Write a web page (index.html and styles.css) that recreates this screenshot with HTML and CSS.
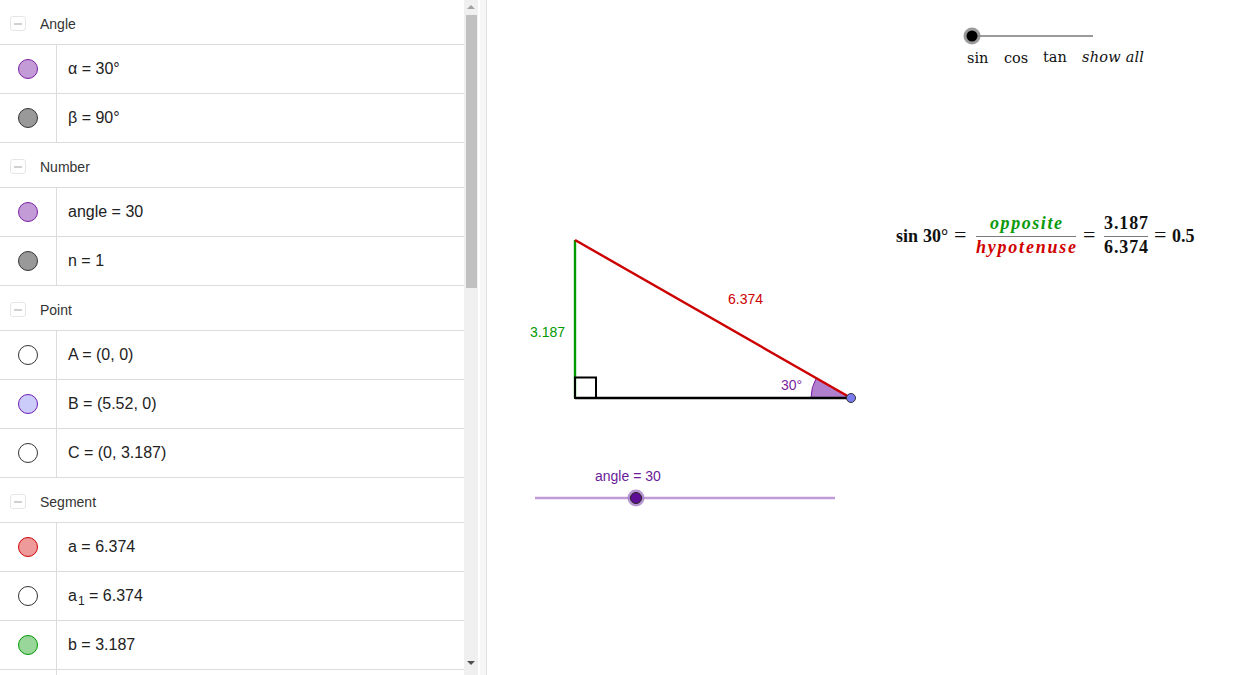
FILE: index.html
```html
<!DOCTYPE html>
<html>
<head>
<meta charset="utf-8">
<link rel="stylesheet" href="styles.css">
</head>
<body>
<div class="app">
  <div class="algebra">
    <div class="group"><span class="toggle"></span><span class="gname">Angle</span></div>
    <div class="row"><div class="mark"><span class="dot purple"></span></div><div class="val">α = 30°</div></div>
    <div class="row"><div class="mark"><span class="dot gray"></span></div><div class="val">β = 90°</div></div>
    <div class="group"><span class="toggle"></span><span class="gname">Number</span></div>
    <div class="row"><div class="mark"><span class="dot purple"></span></div><div class="val">angle = 30</div></div>
    <div class="row"><div class="mark"><span class="dot gray"></span></div><div class="val">n = 1</div></div>
    <div class="group"><span class="toggle"></span><span class="gname">Point</span></div>
    <div class="row"><div class="mark"><span class="dot white"></span></div><div class="val">A = (0, 0)</div></div>
    <div class="row"><div class="mark"><span class="dot lilac"></span></div><div class="val">B = (5.52, 0)</div></div>
    <div class="row"><div class="mark"><span class="dot white"></span></div><div class="val">C = (0, 3.187)</div></div>
    <div class="group"><span class="toggle"></span><span class="gname">Segment</span></div>
    <div class="row"><div class="mark"><span class="dot red"></span></div><div class="val">a = 6.374</div></div>
    <div class="row"><div class="mark"><span class="dot white"></span></div><div class="val">a<sub>1</sub> = 6.374</div></div>
    <div class="row"><div class="mark"><span class="dot green"></span></div><div class="val">b = 3.187</div></div>
    <div class="row"><div class="mark"></div><div class="val"></div></div>
  </div>
  <div class="scrollbar">
    <span class="arrow up"></span>
    <div class="thumb"></div>
    <span class="arrow down"></span>
  </div>
  <div class="splitter"></div>
  <div class="canvas">
    <svg class="drawing" viewBox="487 0 757 675" width="757" height="675">
      <!-- top slider -->
      <line x1="972" y1="36" x2="1093" y2="36" stroke="#9a9a9a" stroke-width="2"/>
      <circle cx="972" cy="36" r="8.5" fill="#8a8a8a" fill-opacity="0.85"/>
      <circle cx="972" cy="36" r="5.5" fill="#000"/>
      <g class="cm">
        <text x="967" y="63">sin</text>
        <text x="1004" y="63">cos</text>
        <text x="1043" y="62">tan</text>
        <text x="1082" y="62" class="it" textLength="62" lengthAdjust="spacing">show all</text>
      </g>

      <!-- formula -->
      <g class="formula">
        <text x="896" y="242">sin</text>
        <text x="923" y="242">30°</text>
        <text x="954" y="242" class="eq">=</text>
        <text x="1026" y="229" text-anchor="middle" class="opp" textLength="72" lengthAdjust="spacing">opposite</text>
        <line x1="976" y1="236.5" x2="1076" y2="236.5" stroke="#7a7a7a" stroke-width="1.2"/>
        <text x="1026" y="253" text-anchor="middle" class="hyp" textLength="100" lengthAdjust="spacing">hypotenuse</text>
        <text x="1083" y="242" class="eq">=</text>
        <text x="1104" y="229" textLength="44" lengthAdjust="spacing">3.187</text>
        <line x1="1104" y1="236.5" x2="1148" y2="236.5" stroke="#7a7a7a" stroke-width="1.2"/>
        <text x="1104" y="253" textLength="44" lengthAdjust="spacing">6.374</text>
        <text x="1154" y="242" class="eq">=</text>
        <text x="1172" y="242">0.5</text>
      </g>

      <!-- triangle -->
      <path d="M851 398 L816.4 378 A40 40 0 0 0 811 398 Z" fill="#9c5fc2" fill-opacity="0.8" stroke="#7b1fa2" stroke-width="1"/>
      <line x1="575" y1="240" x2="575" y2="398" stroke="#009900" stroke-width="2.4"/>
      <line x1="575" y1="240" x2="851" y2="398" stroke="#cc0000" stroke-width="2.4"/>
      <line x1="575" y1="398" x2="851" y2="398" stroke="#000" stroke-width="2.4"/>
      <rect x="575" y="377.5" width="21" height="20.5" fill="none" stroke="#000" stroke-width="2"/>
      <circle cx="851" cy="398" r="4.5" fill="#7b7bf0" stroke="#333" stroke-width="1"/>
      <g class="lbl">
        <text x="530" y="337" fill="#009900">3.187</text>
        <text x="728" y="304" fill="#cc0000">6.374</text>
        <text x="781" y="390" fill="#7b1fa2">30°</text>
      </g>

      <!-- angle slider -->
      <text class="lbl" x="595" y="481" fill="#6a1b9a">angle = 30</text>
      <line x1="535" y1="498" x2="835" y2="498" stroke="#c19bd8" stroke-width="2.4"/>
      <circle cx="636" cy="498" r="8.5" fill="#a57bc6" fill-opacity="0.8"/>
      <circle cx="636" cy="498" r="5.5" fill="#5e0f96" stroke="#222" stroke-width="1"/>
    </svg>
  </div>
</div>
</body>
</html>
```

FILE: styles.css
```css
* { box-sizing: border-box; }
html, body {
  margin: 0;
  padding: 0;
  background: #fff;
  overflow: hidden;
}
.app {
  display: flex;
  width: 1244px;
  height: 675px;
  font-family: "Liberation Sans", Arial, sans-serif;
}
.algebra {
  width: 464px;
  height: 675px;
  overflow: hidden;
  flex: none;
  background: #fff;
}
.group {
  height: 45px;
  border-bottom: 1px solid #dcdcdc;
  display: flex;
  align-items: center;
  padding-left: 10px;
  padding-top: 3px;
}
.toggle {
  width: 16px;
  height: 15px;
  border: 1px solid #e6e6e6;
  border-radius: 3px;
  position: relative;
  margin-right: 14px;
}
.toggle::after {
  content: "";
  position: absolute;
  left: 3px;
  right: 3px;
  top: 6px;
  height: 2px;
  background: #d0d0d0;
}
.gname {
  font-size: 14px;
  color: #333;
}
.row {
  height: 49px;
  border-bottom: 1px solid #dcdcdc;
  display: flex;
}
.mark {
  width: 57px;
  border-right: 1px solid #dcdcdc;
  display: flex;
  align-items: center;
  justify-content: center;
  padding-right: 1px;
}
.dot {
  width: 20px;
  height: 20px;
  border-radius: 50%;
  border: 1px solid #333;
  display: block;
}
.dot.purple { background: #c39bd6; border-color: #7b1fa2; }
.dot.gray { background: #999; border-color: #333; }
.dot.white { background: #fff; border-color: #333; }
.dot.lilac { background: #ccccfa; border-color: #6a1bb5; }
.dot.red { background: #ee9a9a; border-color: #d00000; }
.dot.green { background: #99d699; border-color: #009900; }
.val {
  display: flex;
  align-items: center;
  padding-left: 11px;
  font-size: 16px;
  color: #222;
  white-space: pre;
}
.val sub {
  font-size: 12px;
  position: relative;
  top: 5px;
  margin-left: 1px;
}
.scrollbar {
  width: 14px;
  flex: none;
  background: #f0f0f0;
  position: relative;
}
.thumb {
  position: absolute;
  left: 2px;
  width: 11px;
  top: 15px;
  height: 273px;
  background: #c1c1c1;
}
.arrow {
  position: absolute;
  left: 3px;
  width: 0;
  height: 0;
  border-left: 4px solid transparent;
  border-right: 4px solid transparent;
}
.arrow.up { top: 5px; border-bottom: 4px solid #a3a3a3; }
.arrow.down { bottom: 10px; border-top: 4px solid #505050; }
.splitter {
  width: 9px;
  flex: none;
  background: #f6f6f6;
  border-left: 2px solid #fff;
  border-right: 1px solid #e2e2e2;
}
.canvas {
  flex: 1;
  position: relative;
  background: #fff;
}
.drawing {
  display: block;
}
.cm text {
  font-family: "DejaVu Serif", "Liberation Serif", serif;
  font-size: 14.5px;
  fill: #111;
}
.cm .it {
  font-style: italic;
}
.formula text {
  font-family: "Liberation Serif", "DejaVu Serif", serif;
  font-weight: bold;
  font-size: 18px;
  fill: #111;
}
.formula .eq {
  font-size: 22px;
  font-weight: normal;
}
.formula .opp {
  font-style: italic;
  fill: #0a9a0a;
}
.formula .hyp {
  font-style: italic;
  fill: #d00000;
}
.lbl text, text.lbl {
  font-family: "Liberation Sans", Arial, sans-serif;
  font-size: 14px;
}
```
